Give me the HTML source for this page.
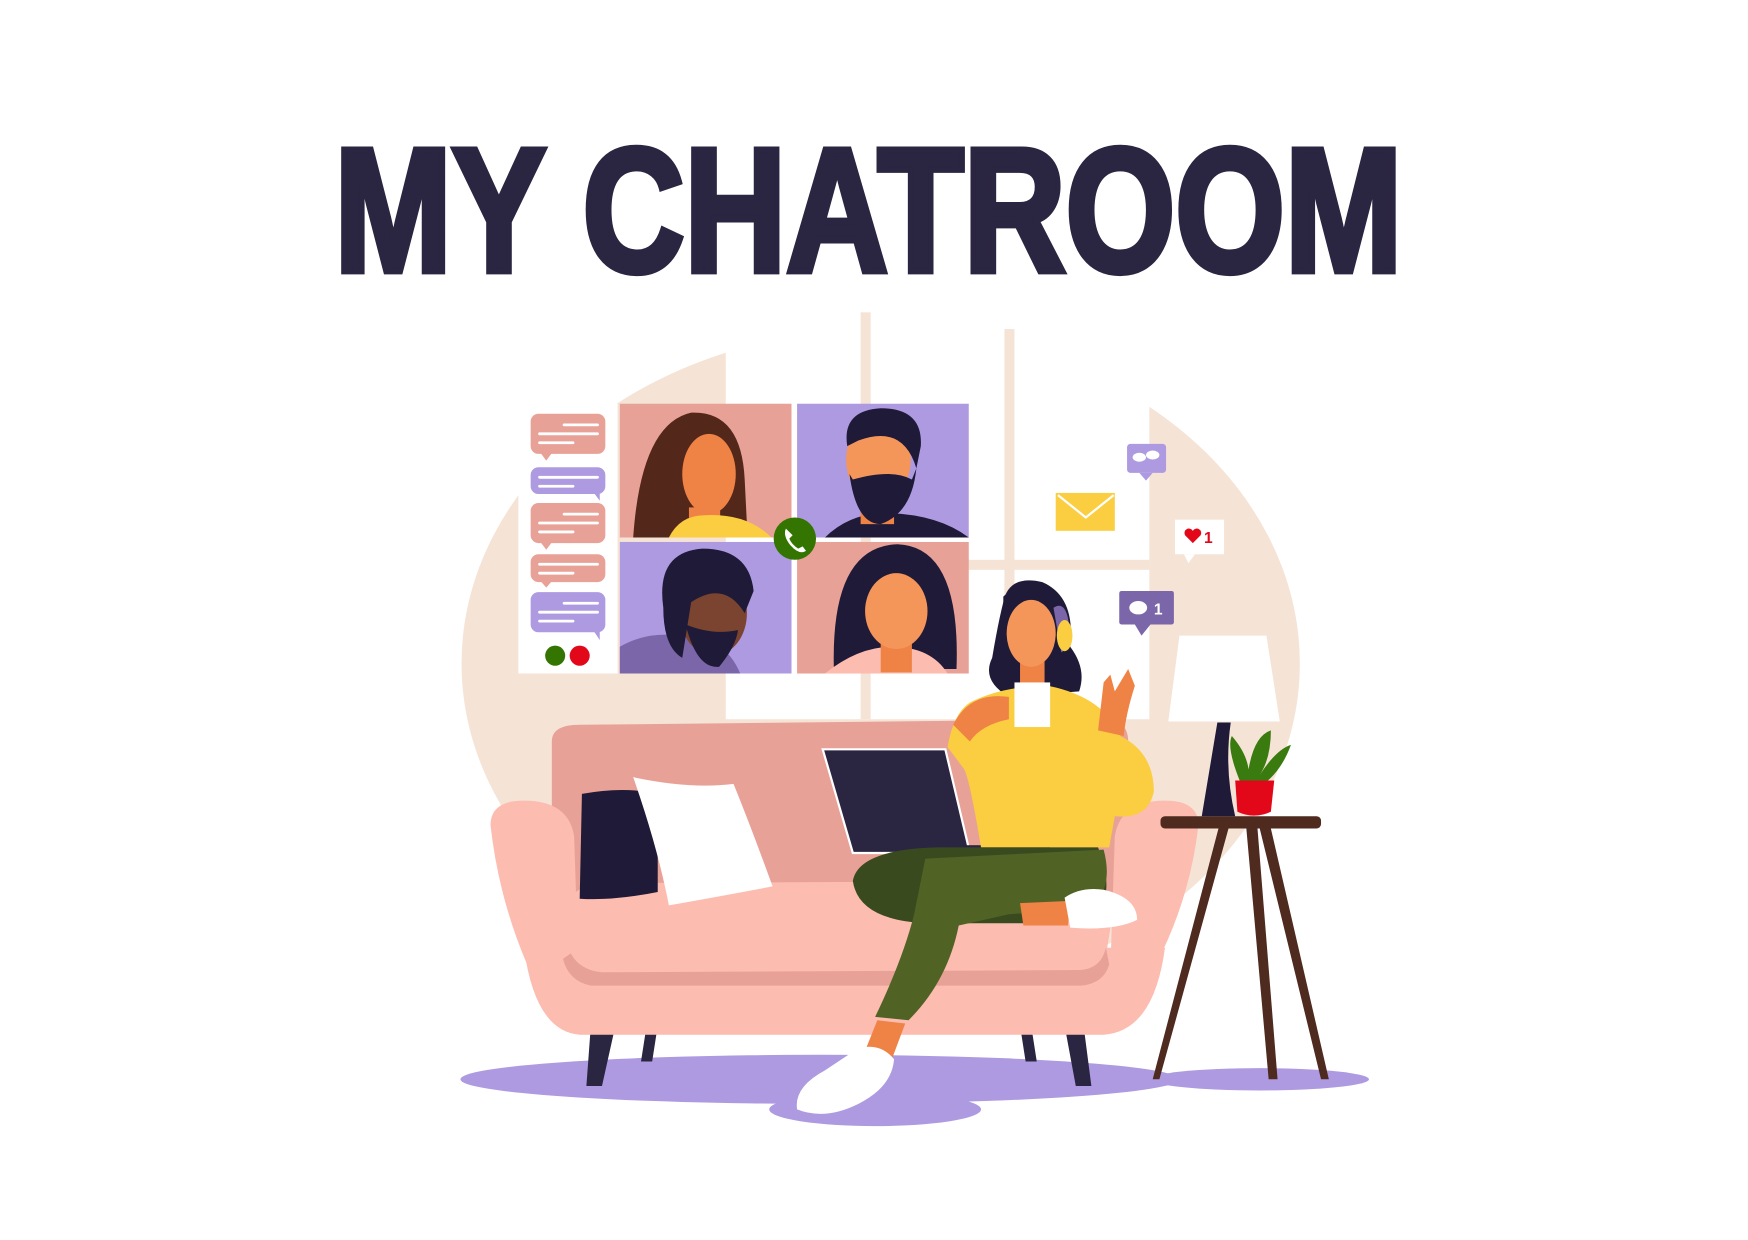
<!DOCTYPE html>
<html><head><meta charset="utf-8"><style>
html,body{margin:0;padding:0;background:#fff;width:1748px;height:1240px;overflow:hidden}
svg{display:block}
</style></head><body>
<svg width="1748" height="1240" viewBox="0 0 1568 1112" xmlns="http://www.w3.org/2000/svg">
<rect width="1568" height="1112" fill="#fff"/>
<text x="300" y="243" font-family="Liberation Sans, sans-serif" font-weight="bold" font-size="158" fill="#2a2541" textLength="958" lengthAdjust="spacingAndGlyphs" stroke="#2a2541" stroke-width="6">MY CHATROOM</text>
<!-- background circle -->
<ellipse cx="790" cy="595" rx="376" ry="300" fill="#f5e3d6"/>
<!-- window -->
<rect x="651" y="280" width="380" height="365" fill="#fff"/>
<path d="M651 300 L651 280 L1031 280 L1031 360 Z" fill="#fff"/>
<rect x="772" y="280" width="9" height="365" fill="#f5e3d6"/>
<rect x="901" y="295" width="9" height="350" fill="#f5e3d6"/>
<rect x="781" y="502" width="250" height="9" fill="#f5e3d6"/>
<!-- sidebar -->
<rect x="465" y="362" width="89" height="242" fill="#fff"/>
<g fill="#e8a197">
<rect x="476" y="371" width="67" height="36" rx="7"/><path d="M484 405 l6 8 l6 -8z"/>
<rect x="476" y="451" width="67" height="36" rx="7"/><path d="M484 485 l6 8 l6 -8z"/>
<rect x="476" y="497" width="67" height="25" rx="7"/><path d="M484 520 l6 7 l6 -7z"/>
</g>
<g fill="#ae9ae0">
<rect x="476" y="419" width="67" height="24" rx="7"/><path d="M532 441 l6 8 l0 -8z"/>
<rect x="476" y="531" width="67" height="36" rx="7"/><path d="M532 565 l6 9 l0 -9z"/>
</g>
<circle cx="498" cy="588" r="9" fill="#337500"/><circle cx="520" cy="588" r="9" fill="#e3071a"/>
<g stroke="#fff" stroke-width="2.5" stroke-linecap="round">
<path d="M506 381h30M484 389h52M484 397h30"/><path d="M484 428h52M484 436h30"/>
<path d="M506 461h30M484 469h52M484 477h30"/><path d="M484 506h52M484 514h30"/>
<path d="M506 541h30M484 549h52M484 557h30"/>
</g>
<!-- tiles -->
<rect x="556" y="362" width="154" height="120" fill="#e8a197"/>
<rect x="715" y="362" width="154" height="120" fill="#ae9ae0"/>
<rect x="556" y="486" width="154" height="118" fill="#ae9ae0"/>
<rect x="715" y="486" width="154" height="118" fill="#e8a197"/>
<!-- TL woman -->
<path d="M568 482 Q575 380 620 370 Q665 368 668 430 L670 470 L640 482 Z" fill="#532719"/>
<rect x="618" y="455" width="28" height="27" fill="#ef8245"/>
<path d="M600 482 Q610 462 632 462 Q670 460 692 482 Z" fill="#fbcd40"/>
<ellipse cx="636" cy="425" rx="24" ry="36" fill="#ef8245"/>
<!-- TR man -->
<path d="M740 482 Q760 462 790 460 Q840 460 869 482 Z" fill="#1f1a37"/>
<rect x="772" y="440" width="30" height="30" fill="#ef8245"/>
<ellipse cx="788" cy="412" rx="29" ry="38" fill="#f4965a"/>
<path d="M760 400 Q755 368 790 366 Q828 366 826 400 L822 420 Q810 380 770 395 Z" fill="#1f1a37"/>
<path d="M762 425 Q768 470 790 470 Q818 460 822 420 L818 430 Q800 420 765 430 Z" fill="#1f1a37"/>
<!-- BL man -->
<path d="M556 604 L556 580 Q580 566 610 570 Q650 570 664 604 Z" fill="#7a66a8"/>
<ellipse cx="640" cy="550" rx="30" ry="38" fill="#7b4430"/>
<path d="M595 545 Q588 495 630 492 Q672 492 676 530 L668 550 Q650 520 620 540 L612 590 Q595 580 595 545 Z" fill="#1f1a37"/>
<path d="M615 560 Q625 600 645 598 Q660 580 662 565 Q640 570 615 560 Z" fill="#1f1a37"/>
<!-- BR woman -->
<path d="M748 600 Q745 490 805 488 Q862 490 858 600 Z" fill="#1f1a37"/>
<path d="M740 604 Q770 580 800 580 Q835 580 850 604 Z" fill="#fcbcb0"/>
<rect x="790" y="565" width="28" height="38" fill="#ef8245"/>
<ellipse cx="804" cy="548" rx="28" ry="34" fill="#f4965a"/>
<path d="M776 535 Q790 500 832 518 L832 505 Q800 480 774 510 Z" fill="#1f1a37"/>
<!-- phone -->
<circle cx="713" cy="483" r="19" fill="#337500"/>
<path d="M705 474 q-3 6 4 15 q8 9 14 5 l-3 -4 l-4 2 q-6 -4 -8 -9 l3 -3 z" fill="#fff"/>
<!-- icons right -->
<rect x="1011" y="398" width="35" height="26" rx="3" fill="#ae9ae0"/><path d="M1022 424 l6 7 l6 -7z" fill="#ae9ae0"/>
<ellipse cx="1022" cy="410" rx="6" ry="4" fill="#fff"/><ellipse cx="1034" cy="408" rx="6" ry="4" fill="#fff"/>
<rect x="947" y="442" width="53" height="34" fill="#fbcd40"/><path d="M949 444 l25 20 l25 -20" stroke="#fff" stroke-width="2" fill="none"/>
<rect x="1054" y="466" width="44" height="31" fill="#fff"/><path d="M1062 497 l4 8 l6 -8z" fill="#fff"/>
<path d="M1070 487 l-7 -7 a4 4 0 0 1 7 -4 a4 4 0 0 1 7 4z" fill="#e3071a"/><text x="1080" y="487" font-family="Liberation Sans" font-size="14" font-weight="bold" fill="#e3071a">1</text>
<rect x="1004" y="530" width="49" height="30" rx="2" fill="#7a66a8"/><path d="M1018 560 l6 10 l8 -10z" fill="#7a66a8"/>
<ellipse cx="1021" cy="545" rx="8" ry="6" fill="#fff"/><text x="1035" y="551" font-family="Liberation Sans" font-size="14" font-weight="bold" fill="#fff">1</text>
<!-- floor -->
<ellipse cx="735" cy="968" rx="322" ry="22" fill="#ae9ae0"/>
<ellipse cx="785" cy="995" rx="95" ry="15" fill="#ae9ae0"/>
<ellipse cx="1130" cy="968" rx="98" ry="10" fill="#ae9ae0"/>
<!-- sofa legs -->
<path d="M530 920 L526 974 L540 974 L552 920Z M580 920 L575 952 L585 952 L590 920Z M915 920 L920 952 L930 952 L925 920Z M955 920 L965 974 L979 974 L972 920Z" fill="#2a2541"/>
<!-- sofa -->
<path d="M495 665 Q495 650 520 650 L990 645 Q1012 645 1012 665 L1012 810 L495 810 Z" fill="#e8a197"/>
<path d="M470 850 L1045 850 Q1035 925 990 928 L520 928 Q480 925 470 850Z" fill="#fcbcb0"/>
<path d="M440 740 Q440 718 470 718 Q510 718 515 750 L520 900 L495 910 Q450 830 440 740 Z" fill="#fcbcb0"/>
<path d="M1075 740 Q1075 718 1045 718 Q1005 718 1000 750 L995 900 L1010 910 Q1065 830 1075 740 Z" fill="#fcbcb0"/>
<path d="M510 810 Q515 790 560 792 L960 790 Q995 790 998 820 L990 870 Q980 878 950 878 L530 878 Q515 875 512 860 Z" fill="#fcbcb0"/>
<path d="M512 855 Q520 870 540 872 L970 870 Q988 868 992 850 L995 865 Q990 882 970 884 L530 884 Q510 880 505 860Z" fill="#e8a197"/>
<!-- pillows -->
<path d="M522 712 Q560 705 590 712 L590 800 Q550 808 520 806 Z" fill="#1f1a37"/>
<path d="M568 697 Q620 708 658 703 Q675 745 693 795 Q640 805 600 812 Q590 760 568 697Z" fill="#fff"/>
<!-- side table -->
<rect x="1041" y="732" width="144" height="11" rx="4" fill="#4e2a1f"/>
<path d="M1093 743 L1034 968 L1040 968 L1102 743Z M1118 743 L1138 968 L1146 968 L1128 743Z M1130 743 L1185 968 L1192 968 L1140 743Z" fill="#4e2a1f"/>
<!-- lamp -->
<path d="M1092 648 L1104 648 Q1098 690 1108 732 L1078 732 Q1085 690 1092 648Z" fill="#1f1a37"/>
<path d="M1058 570 L1136 570 L1148 647 L1048 647Z" fill="#fff"/>
<!-- plant -->
<path d="M1112 700 Q1100 670 1105 660 Q1118 675 1120 690 Q1125 660 1140 655 Q1140 680 1130 695 Q1145 672 1158 668 Q1150 690 1135 702Z" fill="#3a7b10"/>
<path d="M1108 700 L1143 700 L1140 728 Q1125 735 1110 728Z" fill="#e3071a"/>
<!-- laptop -->
<path d="M738 672 L848 672 L870 765 L765 765 Z" fill="#2a2541" stroke="#fff" stroke-width="2"/>
<rect x="850" y="758" width="92" height="8" fill="#2a2541"/>
<!-- woman -->
<path d="M900 540 Q905 515 935 522 Q965 535 960 580 Q975 600 968 620 L905 625 Q880 610 890 590 Q895 560 900 540Z" fill="#1f1a37"/>
<rect x="915" y="590" width="22" height="30" fill="#ef8245"/>
<ellipse cx="925" cy="568" rx="22" ry="30" fill="#f4965a"/>
<path d="M900 548 Q915 525 948 545 L948 532 Q920 515 900 535Z" fill="#1f1a37"/>
<path d="M945 545 Q960 535 960 580 L952 585 Z" fill="#7a66a8"/>
<ellipse cx="955" cy="570" rx="7" ry="14" fill="#fbcd40"/>
<path d="M870 630 Q900 615 940 615 Q990 625 1005 660 Q1035 675 1035 710 Q1030 735 1000 732 L995 760 L880 760 Q870 700 865 690 L850 670 Q855 640 870 630Z" fill="#fbcd40"/>
<path d="M985 655 L990 612 L996 605 L1000 620 L1012 600 L1018 615 Q1010 640 1008 660 Z" fill="#ef8245"/>
<rect x="910" y="612" width="32" height="40" fill="#fff"/>
<path d="M855 650 Q870 620 905 625 L905 645 Q880 650 870 665Z" fill="#ef8245"/>
<!-- legs -->
<path d="M765 790 Q770 762 840 760 L985 760 Q1000 800 985 815 L920 828 L830 828 Q770 825 765 790Z" fill="#3a4a1f"/>
<path d="M830 770 L990 762 Q1000 800 975 815 L905 820 L860 830 Q850 880 815 915 L785 912 Q810 860 820 820Z" fill="#516225"/>
<path d="M915 810 L960 808 L958 830 L918 830Z" fill="#ef8245"/>
<path d="M955 805 Q970 795 990 798 Q1020 805 1020 825 Q1000 835 960 832Z" fill="#fff"/>
<path d="M787 915 L812 918 L800 950 L775 945Z" fill="#ef8245"/>
<path d="M770 940 Q790 935 802 950 Q800 975 770 990 Q740 1005 715 995 Q712 975 740 960Z" fill="#fff"/>
</svg>
</body></html>
